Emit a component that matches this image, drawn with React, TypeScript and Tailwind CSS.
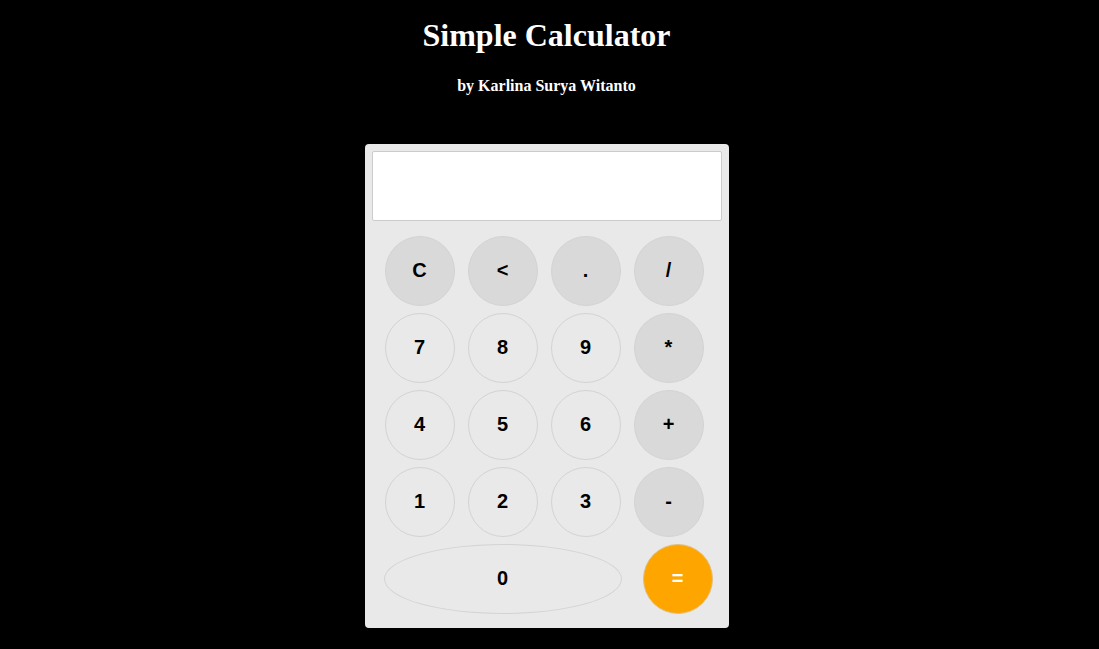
const rows: { label: string; dark?: boolean }[][] = [
  [{ label: "C", dark: true }, { label: "<", dark: true }, { label: ".", dark: true }, { label: "/", dark: true }],
  [{ label: "7" }, { label: "8" }, { label: "9" }, { label: "*", dark: true }],
  [{ label: "4" }, { label: "5" }, { label: "6" }, { label: "+", dark: true }],
  [{ label: "1" }, { label: "2" }, { label: "3" }, { label: "-", dark: true }],
];

function Key({ label, dark }: { label: string; dark?: boolean }) {
  return (
    <button
      className={`w-[70px] h-[70px] pb-[2px] rounded-full border border-[#d3d3d3] text-[20px] font-bold text-black flex items-center justify-center ${
        dark ? "bg-[#d9d9d9]" : "bg-[#e9e9e9]"
      }`}
    >
      {label}
    </button>
  );
}

export default function App() {
  return (
    <div className="min-h-[649px] bg-black flex flex-col items-center pr-[6px]" style={{ fontFamily: '"Liberation Sans", Arial, sans-serif' }}>
      <h1 className="mt-[17px] text-[32px] leading-[37px] font-bold text-white" style={{ fontFamily: '"Liberation Serif", "Times New Roman", serif' }}>
        Simple Calculator
      </h1>
      <h4 className="mt-[23px] text-[16px] leading-[18px] font-bold text-white" style={{ fontFamily: '"Liberation Serif", "Times New Roman", serif' }}>
        by Karlina Surya Witanto
      </h4>
      <div className="mt-[49px] w-[364px] bg-[#e9e9e9] rounded-[4px] p-[7px] pb-[14px]">
        <div className="h-[70px] w-full bg-white border border-[#cccccc] rounded-[2px]" />
        <div className="mt-[15px] ml-[13px] grid grid-cols-[repeat(4,70px)] gap-x-[13px] gap-y-[7px]">
          {rows.flat().map((k, i) => (
            <Key key={i} label={k.label} dark={k.dark} />
          ))}
        </div>
        <div className="mt-[7px] ml-[12px] flex">
          <button className="w-[238px] h-[70px] pb-[2px] rounded-[50%] border border-[#d3d3d3] bg-[#e9e9e9] text-[20px] font-bold text-black">
            0
          </button>
          <button className="ml-[21px] w-[70px] h-[70px] pb-[2px] rounded-full border border-[#e0c080] bg-[#ffa500] text-[20px] font-bold text-white">
            =
          </button>
        </div>
      </div>
    </div>
  );
}
